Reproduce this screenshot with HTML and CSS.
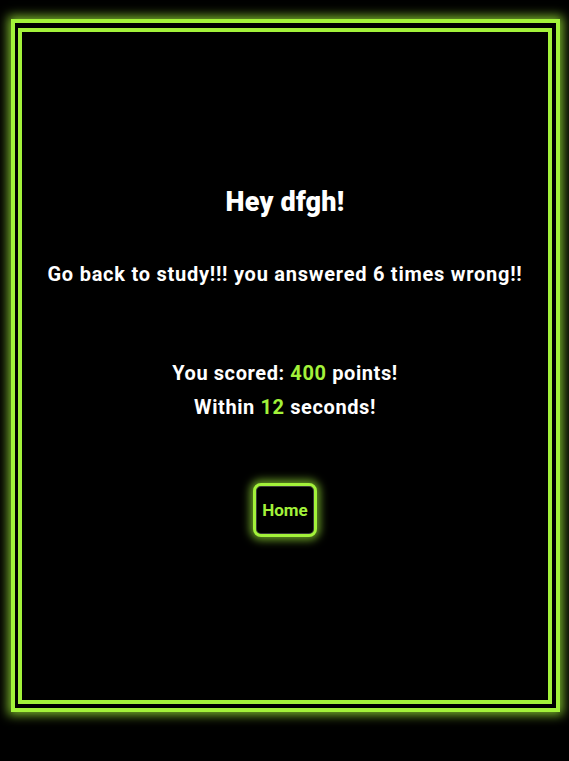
FILE: index.html
```html
<!DOCTYPE html>
<html lang="en">
<head>
<meta charset="utf-8">
<title>Result</title>
<link rel="stylesheet" href="styles.css">
</head>
<body>
<div class="frame">
  <div class="inner">
    <h1 class="title">Hey dfgh!</h1>
    <p class="message">Go back to study!!! you answered 6 times wrong!!</p>
    <div class="score">
      <p class="score-line">You scored: <span class="hl">400</span> points!</p>
      <p class="score-line">Within <span class="hl">12</span> seconds!</p>
    </div>
    <button class="home-btn" type="button">Home</button>
  </div>
</div>
</body>
</html>
```
FILE: styles.css
```css
html, body {
  margin: 0;
  padding: 0;
  background: #000;
}
body {
  width: 569px;
  height: 761px;
  overflow: hidden;
  font-family: Roboto, "Liberation Sans", sans-serif;
  color: #fff;
}
.frame {
  margin: 19px 9px 0 11px;
  height: 676px;
  border: 4px solid #a3f23a;
  padding: 5px 4px 4px 3px;
  box-shadow: 0 0 10px 3px rgba(163, 242, 58, 0.75);
}
.inner {
  height: 676px;
  border: 4px solid #a3f23a;
  display: flex;
  flex-direction: column;
  align-items: center;
  text-align: center;
  box-sizing: border-box;
  padding-top: 153px;
}
.title {
  margin: 0;
  font-size: 27px;
  line-height: 34px;
  font-weight: 900;
  letter-spacing: 0.2px;
}
.message {
  margin: 43px 0 0;
  font-size: 20px;
  line-height: 24px;
  font-weight: 700;
  letter-spacing: 0.75px;
}
.score {
  margin-top: 75px;
  display: flex;
  flex-direction: column;
  gap: 10px;
}
.score-line {
  margin: 0;
  font-size: 20px;
  line-height: 24px;
  font-weight: 700;
  letter-spacing: 0.6px;
}
.hl {
  color: #a3f23a;
}
.home-btn {
  margin-top: 64px;
  width: 64px;
  height: 54px;
  background: #000;
  border: 3px solid #a3f23a;
  border-radius: 8px;
  box-shadow: 0 0 9px 3px rgba(163, 242, 58, 0.65), inset 0 0 0 1px #3a3a3a;
  color: #a3f23a;
  font-family: Roboto, "Liberation Sans", sans-serif;
  font-size: 17px;
  font-weight: 700;
  padding: 0;
}
```
